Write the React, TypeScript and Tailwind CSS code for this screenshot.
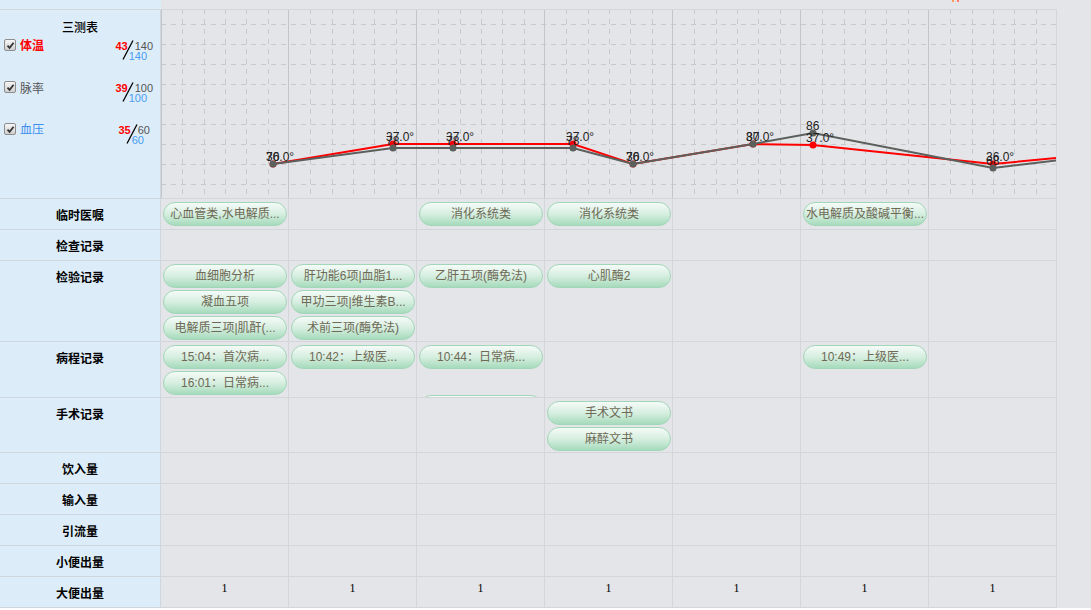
import React from "react";

const FONT = "font-['Liberation_Sans','Noto_Sans_CJK_SC',sans-serif]";
const PILL =
  "h-[24px] w-[124px] shrink-0 overflow-hidden whitespace-nowrap rounded-full border border-[#a2d6b8] bg-linear-to-b from-[#f5fbf8] via-[#d6eee0] to-[#a6dbbc] px-[2px] text-center text-[12px] leading-[22px] text-[#6e6a55]";
const CELL = "flex flex-col gap-[2px] overflow-hidden border-r border-b border-[#d5d6da] pl-[2px] pt-[3px]";
const LABEL = "border-r border-b border-[#cfd6dd] bg-[#dcedf9] pt-[9px] text-center text-[12px] font-bold leading-[16px] text-black";

type Row = { label: string; h: string; cells: string[][] };

// "" = empty slot, "-" = pill clipped by the row (only its top edge shows)
const rows: Row[] = [
  { label: "临时医嘱", h: "h-[31px]", cells: [["心血管类,水电解质..."], [], ["消化系统类"], ["消化系统类"], [], ["水电解质及酸碱平衡..."], []] },
  { label: "检查记录", h: "h-[31px]", cells: [[], [], [], [], [], [], []] },
  {
    label: "检验记录",
    h: "h-[81px]",
    cells: [
      ["血细胞分析", "凝血五项", "电解质三项|肌酐(..."],
      ["肝功能6项|血脂1...", "甲功三项|维生素B...", "术前三项(酶免法)"],
      ["乙肝五项(酶免法)"],
      ["心肌酶2"],
      [],
      [],
      [],
    ],
  },
  {
    label: "病程记录",
    h: "h-[56px]",
    cells: [["15:04：首次病...", "16:01：日常病..."], ["10:42：上级医..."], ["10:44：日常病...", "", "-"], [], [], ["10:49：上级医..."], []],
  },
  { label: "手术记录", h: "h-[55px]", cells: [[], [], [], ["手术文书", "麻醉文书"], [], [], []] },
];

const amounts = ["饮入量", "输入量", "引流量", "小便出量", "大便出量"];

// temperature (red) and pulse (grey) points, chart-local coords
const temp = [[112, 154], [232, 134], [292, 134], [412, 134], [472, 154], [592, 134], [652, 135], [832, 154], [896, 148]];
const pulse = [[112, 154], [232, 138], [292, 138], [412, 138], [472, 154], [592, 134], [652, 123], [832, 158], [896, 150.5]];
const tempText = ["36.0°", "37.0°", "37.0°", "37.0°", "36.0°", "37.0°", "37.0°", "36.0°"];
const pulseText = ["70", "78", "78", "78", "70", "80", "86", "68"];

function Chart() {
  const hLines = [14, 34, 54, 74, 94, 114, 134, 154, 174];
  const vDash: number[] = [];
  for (let k = 1; k < 42; k++) if (k % 6 !== 0) vDash.push(Math.round((128 / 6) * k) + 0.5);
  const solids = [0.5, 127.5, 255.5, 383.5, 511.5, 639.5, 767.5];
  const pts = (a: number[][]) => a.map((p) => p.join(",")).join(" ");
  return (
    <svg width="895" height="188" className="block">
      {hLines.map((y) => (
        <line key={"h" + y} x1="0" x2="895" y1={y + 0.5} y2={y + 0.5} stroke="#c8c9cc" strokeDasharray="5 5" />
      ))}
      {vDash.map((x) => (
        <line key={"v" + x} x1={x} x2={x} y1="0" y2="188" stroke="#c8c9cc" strokeDasharray="5 5" strokeDashoffset="1" />
      ))}
      {solids.map((x) => (
        <line key={"s" + x} x1={x} x2={x} y1="0" y2="188" stroke="#c4c5c8" />
      ))}
      <polyline points={pts(temp)} fill="none" stroke="#ff0000" strokeWidth="2" />
      {temp.slice(0, 8).map(([x, y], i) => (
        <circle key={"tc" + i} cx={x} cy={y} r="3.5" fill="#ff0000" />
      ))}
      <polyline points={pts(pulse)} fill="none" stroke="#5b605c" strokeWidth="2" />
      {pulse.slice(0, 8).map(([x, y], i) => (
        <circle key={"pc" + i} cx={x} cy={y} r="3.5" fill="#5b605c" />
      ))}
      <g fontFamily="Liberation Sans, Arial, sans-serif" fontSize="12" fill="#222">
        {temp.slice(0, 8).map(([x, y], i) => (
          <text key={"tt" + i} x={x - 7} y={y - 3}>
            {tempText[i]}
          </text>
        ))}
        {pulse.slice(0, 8).map(([x, y], i) => (
          <text key={"pt" + i} x={x - 7} y={y - 3}>
            {pulseText[i]}
          </text>
        ))}
      </g>
    </svg>
  );
}

function Check() {
  return (
    <span className="mt-[3px] flex h-[12px] w-[12px] shrink-0 items-center justify-center rounded-[2px] border border-[#8d8d8d] bg-linear-to-b from-[#f6f6f6] to-[#d0d0d0]">
      <svg width="9" height="9" viewBox="0 0 9 9">
        <path d="M1.5 4.6 L3.6 6.8 L7.6 1.8" fill="none" stroke="#333" strokeWidth="1.8" />
      </svg>
    </span>
  );
}

function Frac({ a, b, pos }: { a: string; b: string; pos: string }) {
  return (
    <div className={`relative mt-[5px] flex flex-col items-end font-['Liberation_Sans',sans-serif] text-[11px] leading-[10px] ${pos}`}>
      <div className="flex">
        <span className="font-bold text-[#ff0000]">{a}</span>
        <span className="ml-[7px] text-[#555]">{b}</span>
      </div>
      <div className="pr-[6px] text-[#4a9cf2]">{b}</div>
      <svg className="absolute left-[7px] top-[-1px]" width="12" height="20">
        <line x1="1" y1="19.5" x2="11" y2="0.5" stroke="#000" strokeWidth="1.3" />
      </svg>
    </div>
  );
}

function Legend() {
  return (
    <div className="w-[161px] shrink-0 border-r border-b border-[#cfd6dd] bg-[#dcedf9] pt-[10px]">
      <div className="text-center text-[12px] font-medium leading-[16px] text-black">三测表</div>
      <div className="flex h-[42px] items-start pl-[4px]">
        <Check />
        <span className="ml-[4px] mt-[2px] text-[12px] font-bold leading-[16px] text-[#ff0000]">体温</span>
        <Frac a="43" b="140" pos="ml-auto mr-[7px]" />
      </div>
      <div className="flex h-[42px] items-start pl-[4px]">
        <Check />
        <span className="ml-[4px] mt-[3px] text-[12px] leading-[16px] text-[#555]">脉率</span>
        <Frac a="39" b="100" pos="ml-auto mr-[7px]" />
      </div>
      <div className="flex h-[42px] items-start pl-[4px]">
        <Check />
        <span className="ml-[4px] mt-[2px] text-[12px] leading-[16px] text-[#3d8ef0]">血压</span>
        <Frac a="35" b="60" pos="ml-auto mr-[10px]" />
      </div>
    </div>
  );
}

export default function App() {
  return (
    <div className={`h-[610px] w-[1091px] overflow-hidden bg-white ${FONT}`}>
      <div className="flex">
        <div className="w-[1057px] shrink-0 bg-[#e4e5e9]">
          <div className="flex h-[10px] border-b border-[#d3d7db]">
            <div className="w-[161px] bg-[#dcedf9]" />
            <div className="flex flex-1 items-start pl-[791px]">
              <span className="h-[2px] w-[2px] bg-[#ff9a5a]" />
              <span className="ml-[3px] h-[2px] w-[2px] bg-[#ff7a6a]" />
            </div>
          </div>

          <div className="flex h-[189px]">
            <Legend />
            <div className="w-[896px] overflow-hidden border-r border-b border-[#d5d6da]">
              <Chart />
            </div>
          </div>

          {rows.map((r) => (
            <div key={r.label} className={`grid grid-cols-[161px_repeat(7,128px)] ${r.h}`}>
              <div className={LABEL}>{r.label}</div>
              {r.cells.map((c, i) => (
                <div key={i} className={CELL}>
                  {c.map((t, j) =>
                    t === "" ? (
                      <div key={j} className="h-[22px] shrink-0" />
                    ) : (
                      <div key={j} className={PILL}>
                        {t === "-" ? "" : t}
                      </div>
                    )
                  )}
                </div>
              ))}
            </div>
          ))}

          {amounts.map((a) => (
            <div key={a} className="grid h-[31px] grid-cols-[161px_repeat(7,128px)]">
              <div className={LABEL}>{a}</div>
              {[0, 1, 2, 3, 4, 5, 6].map((i) => (
                <div key={i} className="border-r border-b border-[#d5d6da] pt-[4px] text-center font-['Liberation_Serif',serif] text-[12px] leading-[14px] text-black">
                  {a === "大便出量" ? "1" : ""}
                </div>
              ))}
            </div>
          ))}
        </div>
        <div className="h-[608px] flex-1 bg-[#e4e5e9]" />
      </div>
    </div>
  );
}
